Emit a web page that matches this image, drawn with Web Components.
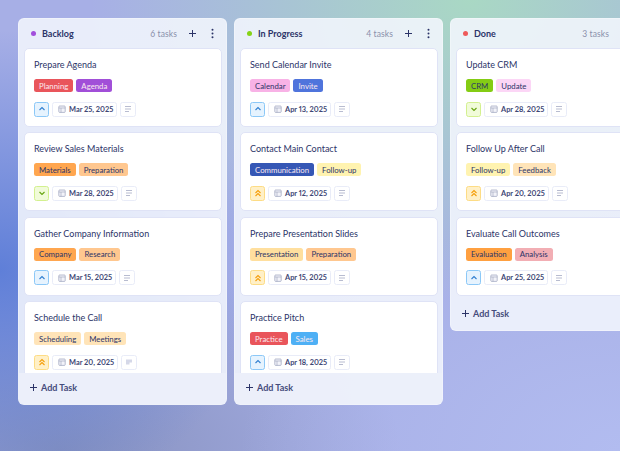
<!DOCTYPE html>
<html><head><meta charset="utf-8">
<style>
html,body{margin:0;padding:0;height:451px;overflow:hidden}
body{font-family:"Lato","Noto Sans",sans-serif;color:#2c3468;
background:
radial-gradient(260px 240px at 0px 270px,#5f7fd8 0%,rgba(95,127,216,0) 100%),
radial-gradient(380px 300px at 470px 0px,#a9d8c4 0%,rgba(169,216,196,0) 100%),
radial-gradient(380px 240px at 620px 451px,#b2bcf0 0%,rgba(178,188,240,0) 100%),
radial-gradient(340px 200px at 60px 451px,#8590bd 0%,rgba(133,144,189,0) 100%),
#a7afe6;}
</style></head><body>
<kanban-board>
 <kanban-column name="Backlog" count="6 tasks" dot="#a24fdc" fixed>
  <task-card title="Prepare Agenda" date="Mar 25, 2025" priority="up"><tag-chip c="#e9555b" t="#fff">Planning</tag-chip><tag-chip c="#a14fd8" t="#fff">Agenda</tag-chip></task-card>
  <task-card title="Review Sales Materials" date="Mar 28, 2025" priority="down"><tag-chip c="#ffa64f">Materials</tag-chip><tag-chip c="#ffc78f">Preparation</tag-chip></task-card>
  <task-card title="Gather Company Information" date="Mar 15, 2025" priority="up"><tag-chip c="#ffa64f">Company</tag-chip><tag-chip c="#ffc78f">Research</tag-chip></task-card>
  <task-card title="Schedule the Call" date="Mar 20, 2025" priority="high" note="solid"><tag-chip c="#ffe4b8">Scheduling</tag-chip><tag-chip c="#ffe4b8">Meetings</tag-chip></task-card>
 </kanban-column>
 <kanban-column name="In Progress" count="4 tasks" dot="#86d316" fixed>
  <task-card title="Send Calendar Invite" date="Apr 13, 2025" priority="up"><tag-chip c="#f8b2e6">Calendar</tag-chip><tag-chip c="#4f74dc" t="#fff">Invite</tag-chip></task-card>
  <task-card title="Contact Main Contact" date="Apr 12, 2025" priority="high"><tag-chip c="#3557b5" t="#fff">Communication</tag-chip><tag-chip c="#fff3b0">Follow-up</tag-chip></task-card>
  <task-card title="Prepare Presentation Slides" date="Apr 15, 2025" priority="high"><tag-chip c="#ffdf9e">Presentation</tag-chip><tag-chip c="#ffc78f">Preparation</tag-chip></task-card>
  <task-card title="Practice Pitch" date="Apr 18, 2025" priority="up"><tag-chip c="#e9555b" t="#fff">Practice</tag-chip><tag-chip c="#4eb0f5" t="#fff">Sales</tag-chip></task-card>
 </kanban-column>
 <kanban-column name="Done" count="3 tasks" dot="#ee5a5a">
  <task-card title="Update CRM" date="Apr 28, 2025" priority="down"><tag-chip c="#84cc14">CRM</tag-chip><tag-chip c="#fcd6f6">Update</tag-chip></task-card>
  <task-card title="Follow Up After Call" date="Apr 20, 2025" priority="high"><tag-chip c="#fff3b0">Follow-up</tag-chip><tag-chip c="#ffe4b8">Feedback</tag-chip></task-card>
  <task-card title="Evaluate Call Outcomes" date="Apr 25, 2025" priority="up"><tag-chip c="#ffa040">Evaluation</tag-chip><tag-chip c="#f2aeb4">Analysis</tag-chip></task-card>
 </kanban-column>
</kanban-board>
<script>
const def=(n,css,html,init)=>customElements.define(n,class extends HTMLElement{
 connectedCallback(){if(this.shadowRoot)return;const r=this.attachShadow({mode:'open'});
  r.innerHTML='<style>'+css+'</style>'+html(this);if(init)init(this,r);}
});
const esc=s=>String(s||'').replace(/&/g,'&amp;').replace(/</g,'&lt;');
def('kanban-board',':host{display:flex;align-items:flex-start;gap:7px;padding:18px 0 0 18px;width:620px;height:451px;box-sizing:border-box;overflow:hidden}',()=>'<slot></slot>');
def('kanban-column',`
:host{display:flex;flex-direction:column;flex:none;width:209px;box-sizing:border-box;background:rgba(243,246,253,.88);border:1px solid rgba(255,255,255,.35);border-radius:6px;overflow:hidden}
:host([fixed]){height:387px}
header{display:flex;align-items:center;height:29px;flex:none;padding:0 9px 0 12px;box-sizing:border-box}
.dot{width:5px;height:5px;border-radius:50%;margin-right:6px;flex:none}
.name{font-size:9px;font-weight:700;color:#2c3468}
.count{margin-left:auto;font-size:8.5px;color:#8a90ab;letter-spacing:.1px}
.plus{margin-left:11px;display:block}.more{margin-left:11px;display:block}
.list{flex:1;min-height:0;overflow:hidden;display:flex;flex-direction:column;gap:5.4px;padding:0 4.5px}
footer{flex:none;height:31px;box-sizing:border-box;padding:0 9.5px 2px;display:flex;align-items:center;gap:3.5px;font-size:9px;font-weight:700;color:#454c7c;background:rgba(236,239,250,.95)}
:host(:not([fixed])) footer{background:none;height:34px;padding:1px 9.5px 0}
:host(:not([fixed])) .more,:host(:not([fixed])) .plus{visibility:hidden}
`,e=>`<header><span class="dot" style="background:${e.getAttribute('dot')}"></span><span class="name">${esc(e.getAttribute('name'))}</span><span class="count">${esc(e.getAttribute('count'))}</span>
<svg class="plus" width="9" height="9" viewBox="0 0 9 9"><path d="M4.5 1v7M1 4.5h7" stroke="#2c3468" stroke-width="1" fill="none"/></svg>
<svg class="more" width="9" height="11" viewBox="0 0 9 11"><g fill="#2c3468"><circle cx="4.5" cy="1.7" r="1"/><circle cx="4.5" cy="5.5" r="1"/><circle cx="4.5" cy="9.3" r="1"/></g></svg></header>
<div class="list"><slot></slot></div>
<footer><svg width="9" height="9" viewBox="0 0 9 9"><path d="M4.5 1v7M1 4.5h7" stroke="#2c3468" stroke-width="1" fill="none"/></svg><span>Add Task</span></footer>`);
const icons={
 up:'<path d="M2.5 6l2.5-2.5L7.5 6" stroke="#2f7fd0" stroke-width="1.1" fill="none"/>',
 down:'<path d="M2.5 4l2.5 2.5L7.5 4" stroke="#65a30d" stroke-width="1.1" fill="none"/>',
 high:'<path d="M2.5 5l2.5-2.5L7.5 5M2.5 8l2.5-2.5L7.5 8" stroke="#f59e0b" stroke-width="1.1" fill="none"/>'};
const pr={up:'background:#e6f3fe;border-color:#8cc8f7',down:'background:#f1fbd9;border-color:#d3f08f',high:'background:#fff0c7;border-color:#fddc85'};
def('task-card',`
:host{display:block;flex:none;box-sizing:border-box;height:79px;background:#fff;border:1px solid #dfe3f6;border-radius:5px;padding:9px 9.5px 0}
.t{font-size:9px;line-height:13px;color:#2c3468;margin:0;white-space:nowrap}
.tags{display:flex;gap:3px;margin-top:8px;height:13px}
.row{display:flex;gap:3px;margin-top:9.5px;height:15px}
.b{box-sizing:border-box;height:15px;border:1px solid #e9ecf8;border-radius:2.5px;display:flex;align-items:center;background:#fff}
.p{width:15px;justify-content:center}
.d{padding:0 3px 0 5px;gap:3px;font-size:7.4px;font-weight:700;color:#3e4675;white-space:nowrap;font-variant-numeric:proportional-nums}
.c{width:16px;justify-content:center}
svg{display:block}
`,e=>{const p=e.getAttribute('priority');const solid=e.getAttribute('note')==='solid';return `<p class="t">${esc(e.getAttribute('title'))}</p><div class="tags"><slot></slot></div>
<div class="row"><span class="b p" style="${pr[p]}"><svg width="10" height="10" viewBox="0 0 10 10">${icons[p]}</svg></span>
<span class="b d"><svg width="8" height="8" viewBox="0 0 8 8"><rect x=".8" y="1" width="6.4" height="6.4" rx=".8" fill="#f2f3f9" stroke="#9ba1bb" stroke-width=".7"/><path d="M.8 3h6.4M3 3v4.4" stroke="#9ba1bb" stroke-width=".6"/></svg>${esc(e.getAttribute('date'))}</span>
<span class="b c"><svg width="8" height="8" viewBox="0 0 8 8">${solid?'<path d="M1 1.5h6v3H4.5v2H1z" fill="#d5d8e8"/>':'<path d="M1 1.5h6M1 4h6M1 6.5h4" stroke="#a6abc4" stroke-width=".8" fill="none"/>'}</svg></span></div>`});
def('tag-chip',`:host{display:flex;align-items:center;box-sizing:border-box;height:13px;padding:0 5px;border-radius:2.5px;font-size:7.8px;white-space:nowrap}`,
e=>'<slot></slot>',e=>{e.style.background=e.getAttribute('c');e.style.color=e.getAttribute('t')?'#fbe9f0':'#2c3468';});
</script>
</body></html>
